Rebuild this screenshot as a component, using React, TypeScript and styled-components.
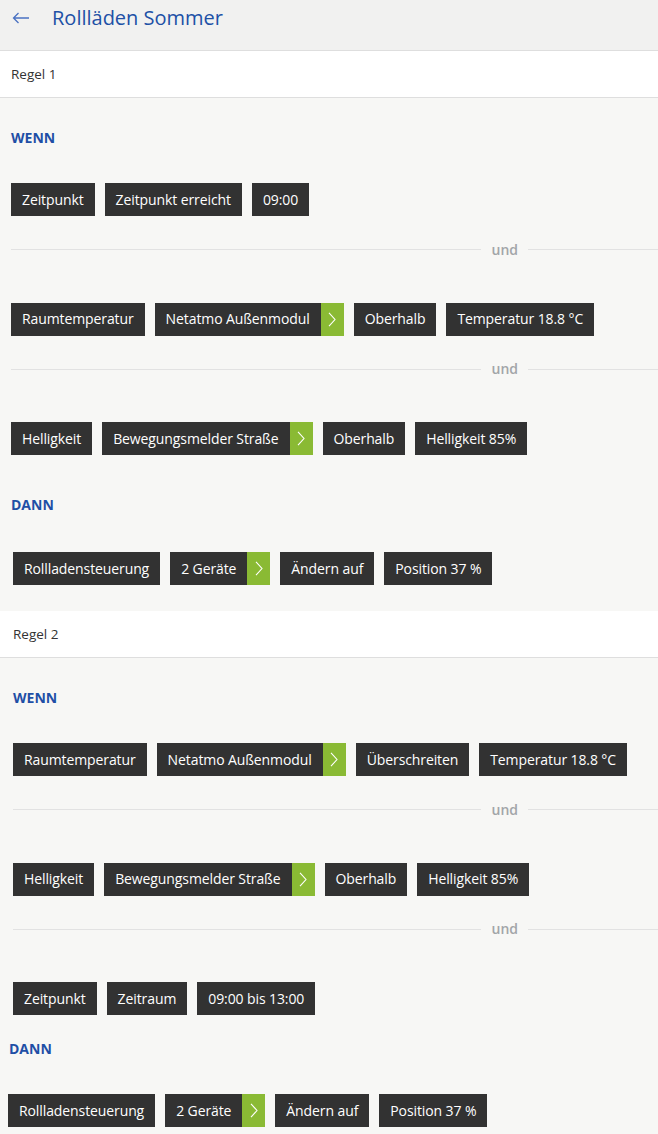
import React from 'react';
import styled, { createGlobalStyle } from 'styled-components';

type ChipData = {
  label: string,
  more?: boolean,
}

type Block =
  | { kind: 'label', text: string, top: number, gap: number, indent: number }
  | { kind: 'row', chips: ChipData[], indent: number }
  | { kind: 'and', indent: number };

type RuleData = {
  title: string,
  indent: number,
  blocks: Block[],
}

const rules: RuleData[] = [
  {
    title: 'Regel 1',
    indent: 11,
    blocks: [
      { kind: 'label', text: 'WENN', top: 30, gap: 35, indent: 11 },
      { kind: 'row', indent: 11, chips: [{ label: 'Zeitpunkt' }, { label: 'Zeitpunkt erreicht' }, { label: '09:00' }] },
      { kind: 'and', indent: 11 },
      { kind: 'row', indent: 11, chips: [{ label: 'Raumtemperatur' }, { label: 'Netatmo Außenmodul', more: true }, { label: 'Oberhalb' }, { label: 'Temperatur 18.8 °C' }] },
      { kind: 'and', indent: 11 },
      { kind: 'row', indent: 11, chips: [{ label: 'Helligkeit' }, { label: 'Bewegungsmelder Straße', more: true }, { label: 'Oberhalb' }, { label: 'Helligkeit 85%' }] },
      { kind: 'label', text: 'DANN', top: 40, gap: 37, indent: 11 },
      { kind: 'row', indent: 13, chips: [{ label: 'Rollladensteuerung' }, { label: '2 Geräte', more: true }, { label: 'Ändern auf' }, { label: 'Position 37 %' }] },
    ],
  },
  {
    title: 'Regel 2',
    indent: 13,
    blocks: [
      { kind: 'label', text: 'WENN', top: 30, gap: 35, indent: 13 },
      { kind: 'row', indent: 13, chips: [{ label: 'Raumtemperatur' }, { label: 'Netatmo Außenmodul', more: true }, { label: 'Überschreiten' }, { label: 'Temperatur 18.8 °C' }] },
      { kind: 'and', indent: 13 },
      { kind: 'row', indent: 13, chips: [{ label: 'Helligkeit' }, { label: 'Bewegungsmelder Straße', more: true }, { label: 'Oberhalb' }, { label: 'Helligkeit 85%' }] },
      { kind: 'and', indent: 13 },
      { kind: 'row', indent: 13, chips: [{ label: 'Zeitpunkt' }, { label: 'Zeitraum' }, { label: '09:00 bis 13:00' }] },
      { kind: 'label', text: 'DANN', top: 24, gap: 35, indent: 9 },
      { kind: 'row', indent: 8, chips: [{ label: 'Rollladensteuerung' }, { label: '2 Geräte', more: true }, { label: 'Ändern auf' }, { label: 'Position 37 %' }] },
    ],
  },
];

const Chevron = () => (
  <svg width="8" height="15" viewBox="0 0 8 15" fill="none">
    <path d="M1 0.8L7 7.5L1 14.2" stroke="#fff" strokeWidth="1.1" />
  </svg>
);

const BackArrow = () => (
  <svg width="18" height="12" viewBox="0 0 18 12" fill="none">
    <path d="M17 6H1.5M6.5 1L1.5 6L6.5 11" stroke="#4a72c2" strokeWidth="1.3" />
  </svg>
);

const App = () => (
  <>
    <GlobalStyle />
    <Page>
      <Header>
        <BackButton><BackArrow /></BackButton>
        <Title>Rollläden Sommer</Title>
      </Header>
      {rules.map((rule, ri) => (
        <Rule key={rule.title} last={ri === rules.length - 1}>
          <RuleBar indent={rule.indent}>{rule.title}</RuleBar>
          {rule.blocks.map((b, i) => {
            const prev = i > 0 ? rule.blocks[i - 1] : null;
            if (b.kind === 'label') {
              return <SectionLabel key={i} top={b.top} indent={b.indent}>{b.text}</SectionLabel>;
            }
            if (b.kind === 'and') {
              return (
                <AndDivider key={i} indent={b.indent}>
                  <Line />
                  <AndText>und</AndText>
                  <RightLine />
                </AndDivider>
              );
            }
            return (
              <ChipRow key={i} indent={b.indent} top={prev && prev.kind === 'label' ? prev.gap : 43}>
                {b.chips.map((c, ci) => (
                  <Chip key={ci}>
                    <ChipText>{c.label}</ChipText>
                    {c.more && <ChipMore><Chevron /></ChipMore>}
                  </Chip>
                ))}
              </ChipRow>
            );
          })}
        </Rule>
      ))}
    </Page>
  </>
);

const GlobalStyle = createGlobalStyle`
  html, body {
    margin: 0;
    padding: 0;
    background: #f7f7f5;
  }
  body {
    font-family: "Open Sans", "Liberation Sans", sans-serif;
    -webkit-font-smoothing: antialiased;
  }
`;

const Page = styled.div`
  width: 658px;
  min-height: 1134px;
  background: #f7f7f5;
  overflow: hidden;
`;

const Header = styled.div`
  height: 51px;
  display: flex;
  align-items: center;
  padding-bottom: 15px;
  box-sizing: border-box;
  background: #f1f1f0;
  border-bottom: 1px solid #dedede;
`;

const BackButton = styled.div`
  width: 52px;
  display: flex;
  align-items: center;
  padding-left: 12px;
  box-sizing: border-box;
`;

const Title = styled.h1`
  margin: 0;
  font-size: 20px;
  font-weight: 400;
  color: #2050a6;
  line-height: 26px;
`;

const Rule = styled.div<{ last: boolean }>`
  padding-bottom: ${p => (p.last ? 0 : 26)}px;
`;

const RuleBar = styled.div<{ indent: number }>`
  height: 46px;
  display: flex;
  align-items: center;
  padding-left: ${p => p.indent}px;
  background: #fff;
  border-bottom: 1px solid #dedede;
  font-size: 13.5px;
  color: #333;
`;

const SectionLabel = styled.div<{ top: number, indent: number }>`
  margin-top: ${p => p.top}px;
  padding-left: ${p => p.indent}px;
  line-height: 20px;
  font-size: 14px;
  font-weight: 700;
  color: #1f4fa6;
`;

const ChipRow = styled.div<{ indent: number, top: number }>`
  display: flex;
  gap: 10px;
  margin-top: ${p => p.top}px;
  padding-left: ${p => p.indent}px;
`;

const Chip = styled.div`
  display: flex;
  height: 33px;
  background: #323232;
  color: #fff;
`;

const ChipText = styled.span`
  display: flex;
  align-items: center;
  padding: 0 11px 1px;
  font-size: 14px;
  letter-spacing: -0.1px;
  white-space: nowrap;
`;

const ChipMore = styled.span`
  width: 23px;
  display: flex;
  align-items: center;
  justify-content: center;
  background: #8aba34;
`;

const AndDivider = styled.div<{ indent: number }>`
  display: flex;
  align-items: center;
  gap: 10px;
  margin-top: 23.5px;
  padding-left: ${p => p.indent}px;
  height: 20px;
`;

const Line = styled.div`
  flex: 1;
  height: 1px;
  background: #e2e2e2;
`;

const RightLine = styled(Line)`
  flex: 0 0 130px;
`;

const AndText = styled.span`
  font-size: 14px;
  font-weight: 600;
  color: #a2a5a8;
  line-height: 20px;
`;

export default App;
